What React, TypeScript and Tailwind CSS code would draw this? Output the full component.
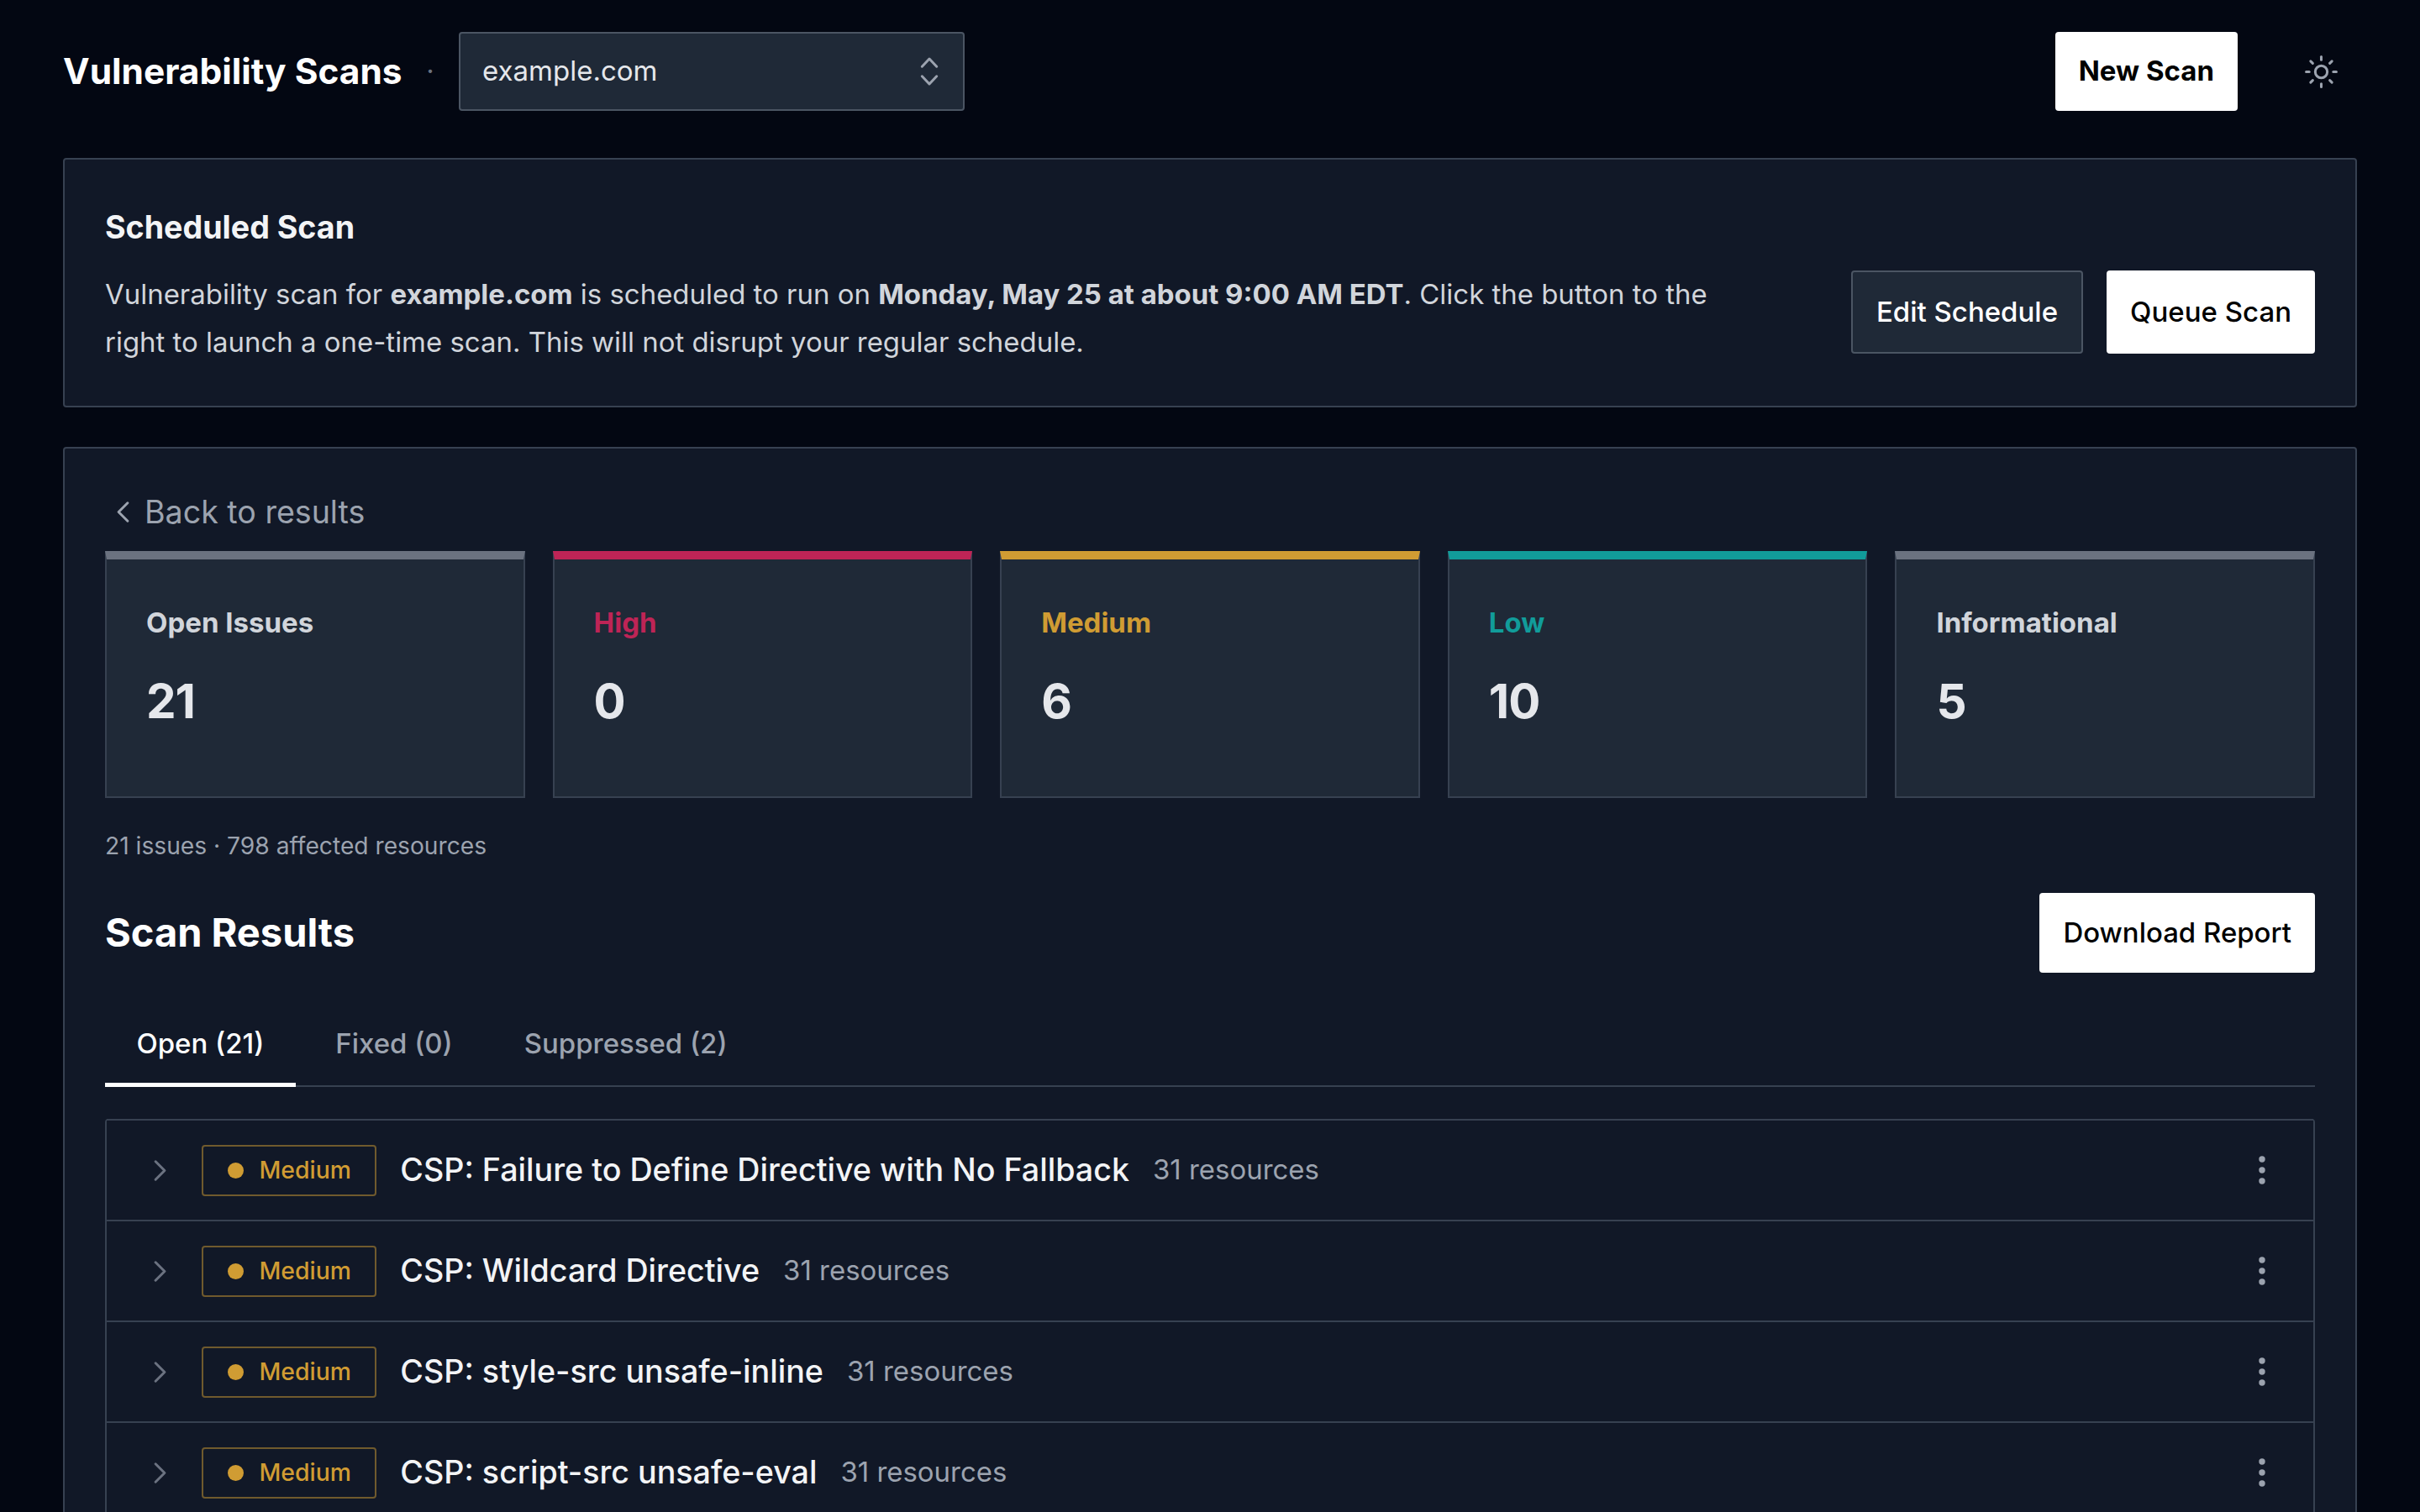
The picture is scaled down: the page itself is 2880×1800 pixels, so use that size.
import clsx from 'clsx';
import { ChevronLeft, ChevronRight, Sun } from 'lucide-react';

interface Stat {
  label: string;
  value: number;
  bar: string;
  text: string;
}

interface Issue {
  title: string;
  resources: number;
}

const stats: Stat[] = [
  { label: 'Open Issues', value: 21, bar: 'border-t-[#6b7280]', text: 'text-[#d1d5db]' },
  { label: 'High', value: 0, bar: 'border-t-[#be2456]', text: 'text-[#be2456]' },
  { label: 'Medium', value: 6, bar: 'border-t-[#d09c33]', text: 'text-[#d09c33]' },
  { label: 'Low', value: 10, bar: 'border-t-[#119c9a]', text: 'text-[#119c9a]' },
  { label: 'Informational', value: 5, bar: 'border-t-[#6b7280]', text: 'text-[#d1d5db]' },
];

const tabs = ['Open (21)', 'Fixed (0)', 'Suppressed (2)'];

const issues: Issue[] = [
  { title: 'CSP: Failure to Define Directive with No Fallback', resources: 31 },
  { title: 'CSP: Wildcard Directive', resources: 31 },
  { title: 'CSP: style-src unsafe-inline', resources: 31 },
  { title: 'CSP: script-src unsafe-eval', resources: 31 },
];

function SelectorIcon() {
  return (
    <svg
      viewBox="0 0 42 42"
      className="size-[42px] text-[#9ca3af]"
      fill="none"
      stroke="currentColor"
      strokeWidth={3}
      strokeLinecap="round"
      strokeLinejoin="round"
    >
      <path d="M12.3 15.2 21 6l8.7 9.2" />
      <path d="M12.3 26.8 21 36l8.7-9.2" />
    </svg>
  );
}

function Header() {
  return (
    <header className="flex items-center pt-[38px] pb-[56px]">
      <h1 className="text-[42.4px] font-bold text-white">Vulnerability Scans</h1>
      <span className="w-[67px] text-center text-[33px] text-[#6b7280]">·</span>
      <button className="flex h-[94px] w-[602px] items-center justify-between rounded-[4px] border-2 border-[#4b5563] bg-[#1f2937] pr-[19px] pl-[26.5px] text-[33px] text-[#e5e7eb]">
        example.com
        <SelectorIcon />
      </button>
      <button className="ml-auto h-[94px] rounded-[4px] bg-white px-[28px] text-[33px] font-bold text-black">
        New Scan
      </button>
      <button className="mr-[21px] ml-[78px]">
        <Sun className="size-[43px] text-[#9ca3af]" strokeWidth={1.7} />
      </button>
    </header>
  );
}

function ScheduledScan() {
  return (
    <section className="h-[297px] rounded-[4px] border-2 border-[#374151] bg-[#111827] px-[48px] py-[47px]">
      <h2 className="text-[37.6px] leading-[68px] font-bold text-[#f3f4f6]">Scheduled Scan</h2>
      <div className="mt-[17px] flex items-start justify-between">
        <p className="w-[1960px] text-[32.95px] leading-[56.67px] text-[#d1d5db]">
          Vulnerability scan for <strong className="font-bold">example.com</strong> is scheduled to run on{' '}
          <strong className="font-bold">Monday, May 25 at about 9:00 AM EDT</strong>. Click the button to the right to
          launch a one-time scan. This will not disrupt your regular schedule.
        </p>
        <div className="flex gap-[28px] text-[33px] font-medium">
          <button className="h-[99px] rounded-[4px] border-2 border-[#4b5563] bg-[#1f2937] px-[28px] pt-px text-white">
            Edit Schedule
          </button>
          <button className="h-[99px] rounded-[4px] bg-white px-[28px] pt-px text-black">Queue Scan</button>
        </div>
      </div>
    </section>
  );
}

function StatCard({ label, value, bar, text }: Stat) {
  return (
    <div
      className={clsx('h-[294px] border-2 border-t-[10px] border-[#374151] bg-[#1f2937] px-[47px] pt-[47px]', bar)}
    >
      <p className={clsx('text-[33px] leading-[57px] font-bold', text)}>{label}</p>
      <p className="mt-[18px] text-[56.5px] leading-[93px] font-bold tracking-[-1px] text-[#e5e7eb]">{value}</p>
    </div>
  );
}

function IssueRow({ title, resources }: Issue) {
  return (
    <li className="flex h-[120px] items-center border-t-2 border-[#374151] pr-[42px] pl-[42px]">
      <ChevronRight className="size-[43px] text-[#6b7280]" strokeWidth={1.7} />
      <span className="ml-[28px] flex h-[61px] items-center gap-[19px] rounded-[4px] border-2 border-[#d09c33]/50 px-[28.5px] text-[28.33px] font-medium text-[#d09c33]">
        <span className="size-[19px] rounded-full bg-[#d09c33]" />
        Medium
      </span>
      <span className="ml-[28px] text-[37.65px] font-medium text-[#f3f4f6]">{title}</span>
      <span className="ml-[28px] text-[32.95px] text-[#9ca3af]">{resources} resources</span>
      <svg viewBox="0 0 38 38" className="ml-auto size-[38px] text-[#9ca3af]" fill="currentColor">
        <circle cx="19" cy="6" r="3.7" />
        <circle cx="19" cy="19" r="3.7" />
        <circle cx="19" cy="32" r="3.7" />
      </svg>
    </li>
  );
}

export default function App() {
  return (
    <div className="h-screen overflow-hidden bg-[#030712] px-[75px] font-['Inter',sans-serif]">
      <Header />
      <ScheduledScan />

      <section className="mt-[47px] h-[1400px] rounded-[4px] border-2 border-[#374151] bg-[#111827] px-[48px] py-[47px]">
        <a className="flex items-center gap-[4px] text-[37.6px] leading-[57px] text-[#9ca3af]">
          <ChevronLeft className="size-[43px]" strokeWidth={1.7} />
          Back to results
        </a>

        <div className="mt-[18px] grid grid-cols-5 gap-[33px]">
          {stats.map((stat) => (
            <StatCard key={stat.label} {...stat} />
          ))}
        </div>

        <p className="mt-[29px] text-[28.2px] leading-[56px] text-[#9ca3af]">21 issues · 798 affected resources</p>

        <div className="mt-[28px] flex items-center justify-between">
          <h2 className="text-[47px] font-bold text-white">Scan Results</h2>
          <button className="h-[95px] rounded-[4px] bg-white px-[28px] text-[32.95px] font-medium text-black">
            Download Report
          </button>
        </div>

        <nav className="mt-[37px] flex gap-[10px] border-b-2 border-[#374151]">
          {tabs.map((tab, i) => (
            <button
              key={tab}
              className={clsx(
                '-mb-[2px] h-[99px] border-b-[5px] px-[37.5px] pt-[2px] text-[32.95px] font-medium',
                i === 0 ? 'border-white text-white' : 'border-transparent text-[#9ca3af]'
              )}
            >
              {tab}
            </button>
          ))}
        </nav>

        <ul className="mt-[38px] h-[600px] rounded-[4px] border-x-2 border-[#374151]">
          {issues.map((issue) => (
            <IssueRow key={issue.title} {...issue} />
          ))}
        </ul>
      </section>
    </div>
  );
}
